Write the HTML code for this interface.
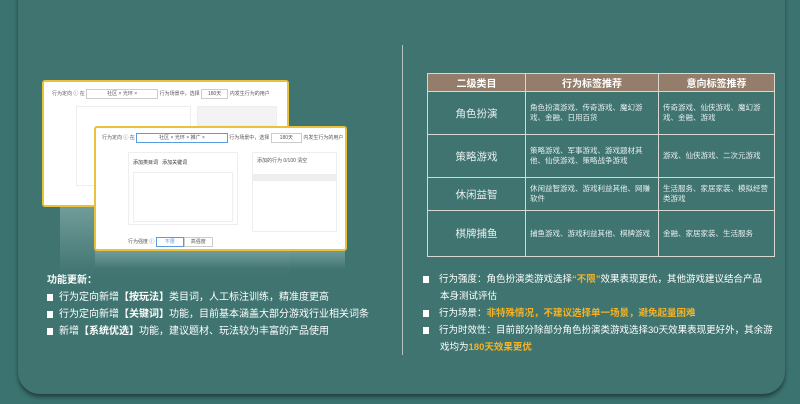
<!DOCTYPE html>
<html><head><meta charset="utf-8"><style>
*{margin:0;padding:0;box-sizing:border-box}
body{width:800px;height:404px;overflow:hidden;background:#3b7370;font-family:"Liberation Sans","Noto Sans CJK SC",sans-serif;position:relative}
.panel{position:absolute;left:18px;top:-20px;width:767px;height:414px;background:#3f7471;border-radius:0 0 22px 22px;box-shadow:0 3px 4px rgba(0,0,0,.45)}
.vline{position:absolute;left:402px;top:45px;width:1px;height:310px;background:#b8c4bf}
table{position:absolute;left:427px;top:73px;border-collapse:collapse;color:#eef;font-size:8px}
td,th{border:1px solid #d8d8d0;}
th{background:#947d6a;color:#fff;font-size:10px;height:18px}
td.c{text-align:center;font-size:10.5px;color:#e8eeee}
td.t{padding:0 4px;line-height:10px;font-size:7.5px;color:#e6eeee}
.win{position:absolute;background:#fff;border:2px solid #e7c23a;border-radius:3px;font-size:5px;color:#555}
.refl{position:absolute;background:linear-gradient(#7ea7a3,#3f7471);opacity:.8}
.txt{position:absolute;color:#fff;font-size:10px;line-height:17px;white-space:nowrap}
.b{display:inline-block;width:6px;height:7px;background:#fff;margin-right:6px;vertical-align:-1px}
.o{color:#f5b325;font-weight:bold}
</style></head><body>
<div class="panel"></div>
<div class="vline"></div>
<div class="refl" style="left:60px;top:206px;width:230px;height:70px"></div>
<div class="refl" style="left:95px;top:250px;width:250px;height:20px"></div>
<div class="win" style="left:42px;top:80px;width:247px;height:127px">
 <div style="position:absolute;left:8px;top:8px">行为定向 ⓘ 在 <span style="border:1px solid #ccc;padding:1px 20px">社区 × 光环 ×</span> 行为场景中，选择 <span style="border:1px solid #ccc;padding:1px 6px">180天</span> 内发生行为的用户</div>
 <div style="position:absolute;left:32px;top:24px;width:115px;height:80px;border:1px solid #eee"></div>
 <div style="position:absolute;left:153px;top:24px;width:80px;height:20px;border:1px solid #eee;background:#f3f3f3"></div>
</div>
<div class="win" style="left:94px;top:126px;width:253px;height:125px">
 <div style="position:absolute;left:6px;top:6px">行为定向 ⓘ 在 <span style="border:1px solid #5b9be0;padding:1px 22px">社区 × 光环 × 推广 ×</span> 行为场景中，选择 <span style="border:1px solid #ccc;padding:1px 8px">180天</span> 内发生行为的用户</div>
 <div style="position:absolute;left:32px;top:24px;width:110px;height:73px;border:1px solid #eee"><div style="margin:6px 4px;color:#333">添加类目词 &nbsp; 添加关键词</div><div style="margin:0 4px;height:50px;border:1px solid #eee"></div></div>
 <div style="position:absolute;left:156px;top:24px;width:85px;height:80px;border:1px solid #eee"><div style="margin:4px">添加的行为 0/100 清空</div><div style="background:#eee;height:7px;margin-top:10px"></div></div>
 <div style="position:absolute;left:32px;top:110px">行为强度 ⓘ <span style="border:1px solid #5b9be0;color:#5b9be0;padding:1px 8px">不限</span><span style="border:1px solid #ccc;padding:1px 6px">高强度</span></div>
</div>
<table>
<tr><th style="width:98px">二级类目</th><th style="width:133px">行为标签推荐</th><th style="width:116px">意向标签推荐</th></tr>
<tr style="height:43px"><td class="c">角色扮演</td><td class="t">角色扮演游戏、传奇游戏、魔幻游戏、金融、日用百货</td><td class="t">传奇游戏、仙侠游戏、魔幻游戏、金融、游戏</td></tr>
<tr style="height:43px"><td class="c">策略游戏</td><td class="t">策略游戏、军事游戏、游戏题材其他、仙侠游戏、策略战争游戏</td><td class="t">游戏、仙侠游戏、二次元游戏</td></tr>
<tr style="height:33px"><td class="c">休闲益智</td><td class="t">休闲益智游戏、游戏利益其他、网赚软件</td><td class="t">生活服务、家居家装、模拟经营类游戏</td></tr>
<tr style="height:46px"><td class="c">棋牌捕鱼</td><td class="t">捕鱼游戏、游戏利益其他、棋牌游戏</td><td class="t">金融、家居家装、生活服务</td></tr>
</table>
<div class="txt" style="left:47px;top:272px;width:340px">
<div style="font-weight:bold">功能更新：</div>
<div><span class="b"></span>行为定向新增<b>【按玩法】</b>类目词，人工标注训练，精准度更高</div>
<div><span class="b"></span>行为定向新增<b>【关键词】</b>功能，目前基本涵盖大部分游戏行业相关词条</div>
<div><span class="b"></span>新增<b>【系统优选】</b>功能，建议题材、玩法较为丰富的产品使用</div>
</div>
<div class="txt" style="left:423px;top:271px;width:350px;font-size:9.5px">
<div><span class="b" style="margin-right:10px"></span>行为强度：角色扮演类游戏选择<span class="o">“不限”</span>效果表现更优，其他游戏建议结合产品</div>
<div style="padding-left:17px">本身测试评估</div>
<div><span class="b" style="margin-right:10px"></span>行为场景：<span class="o">非特殊情况，不建议选择单一场景，避免起量困难</span></div>
<div><span class="b" style="margin-right:10px"></span>行为时效性：目前部分除部分角色扮演类游戏选择30天效果表现更好外，其余游</div>
<div style="padding-left:17px">戏均为<span class="o">180天效果更优</span></div>
</div>
</body></html>
